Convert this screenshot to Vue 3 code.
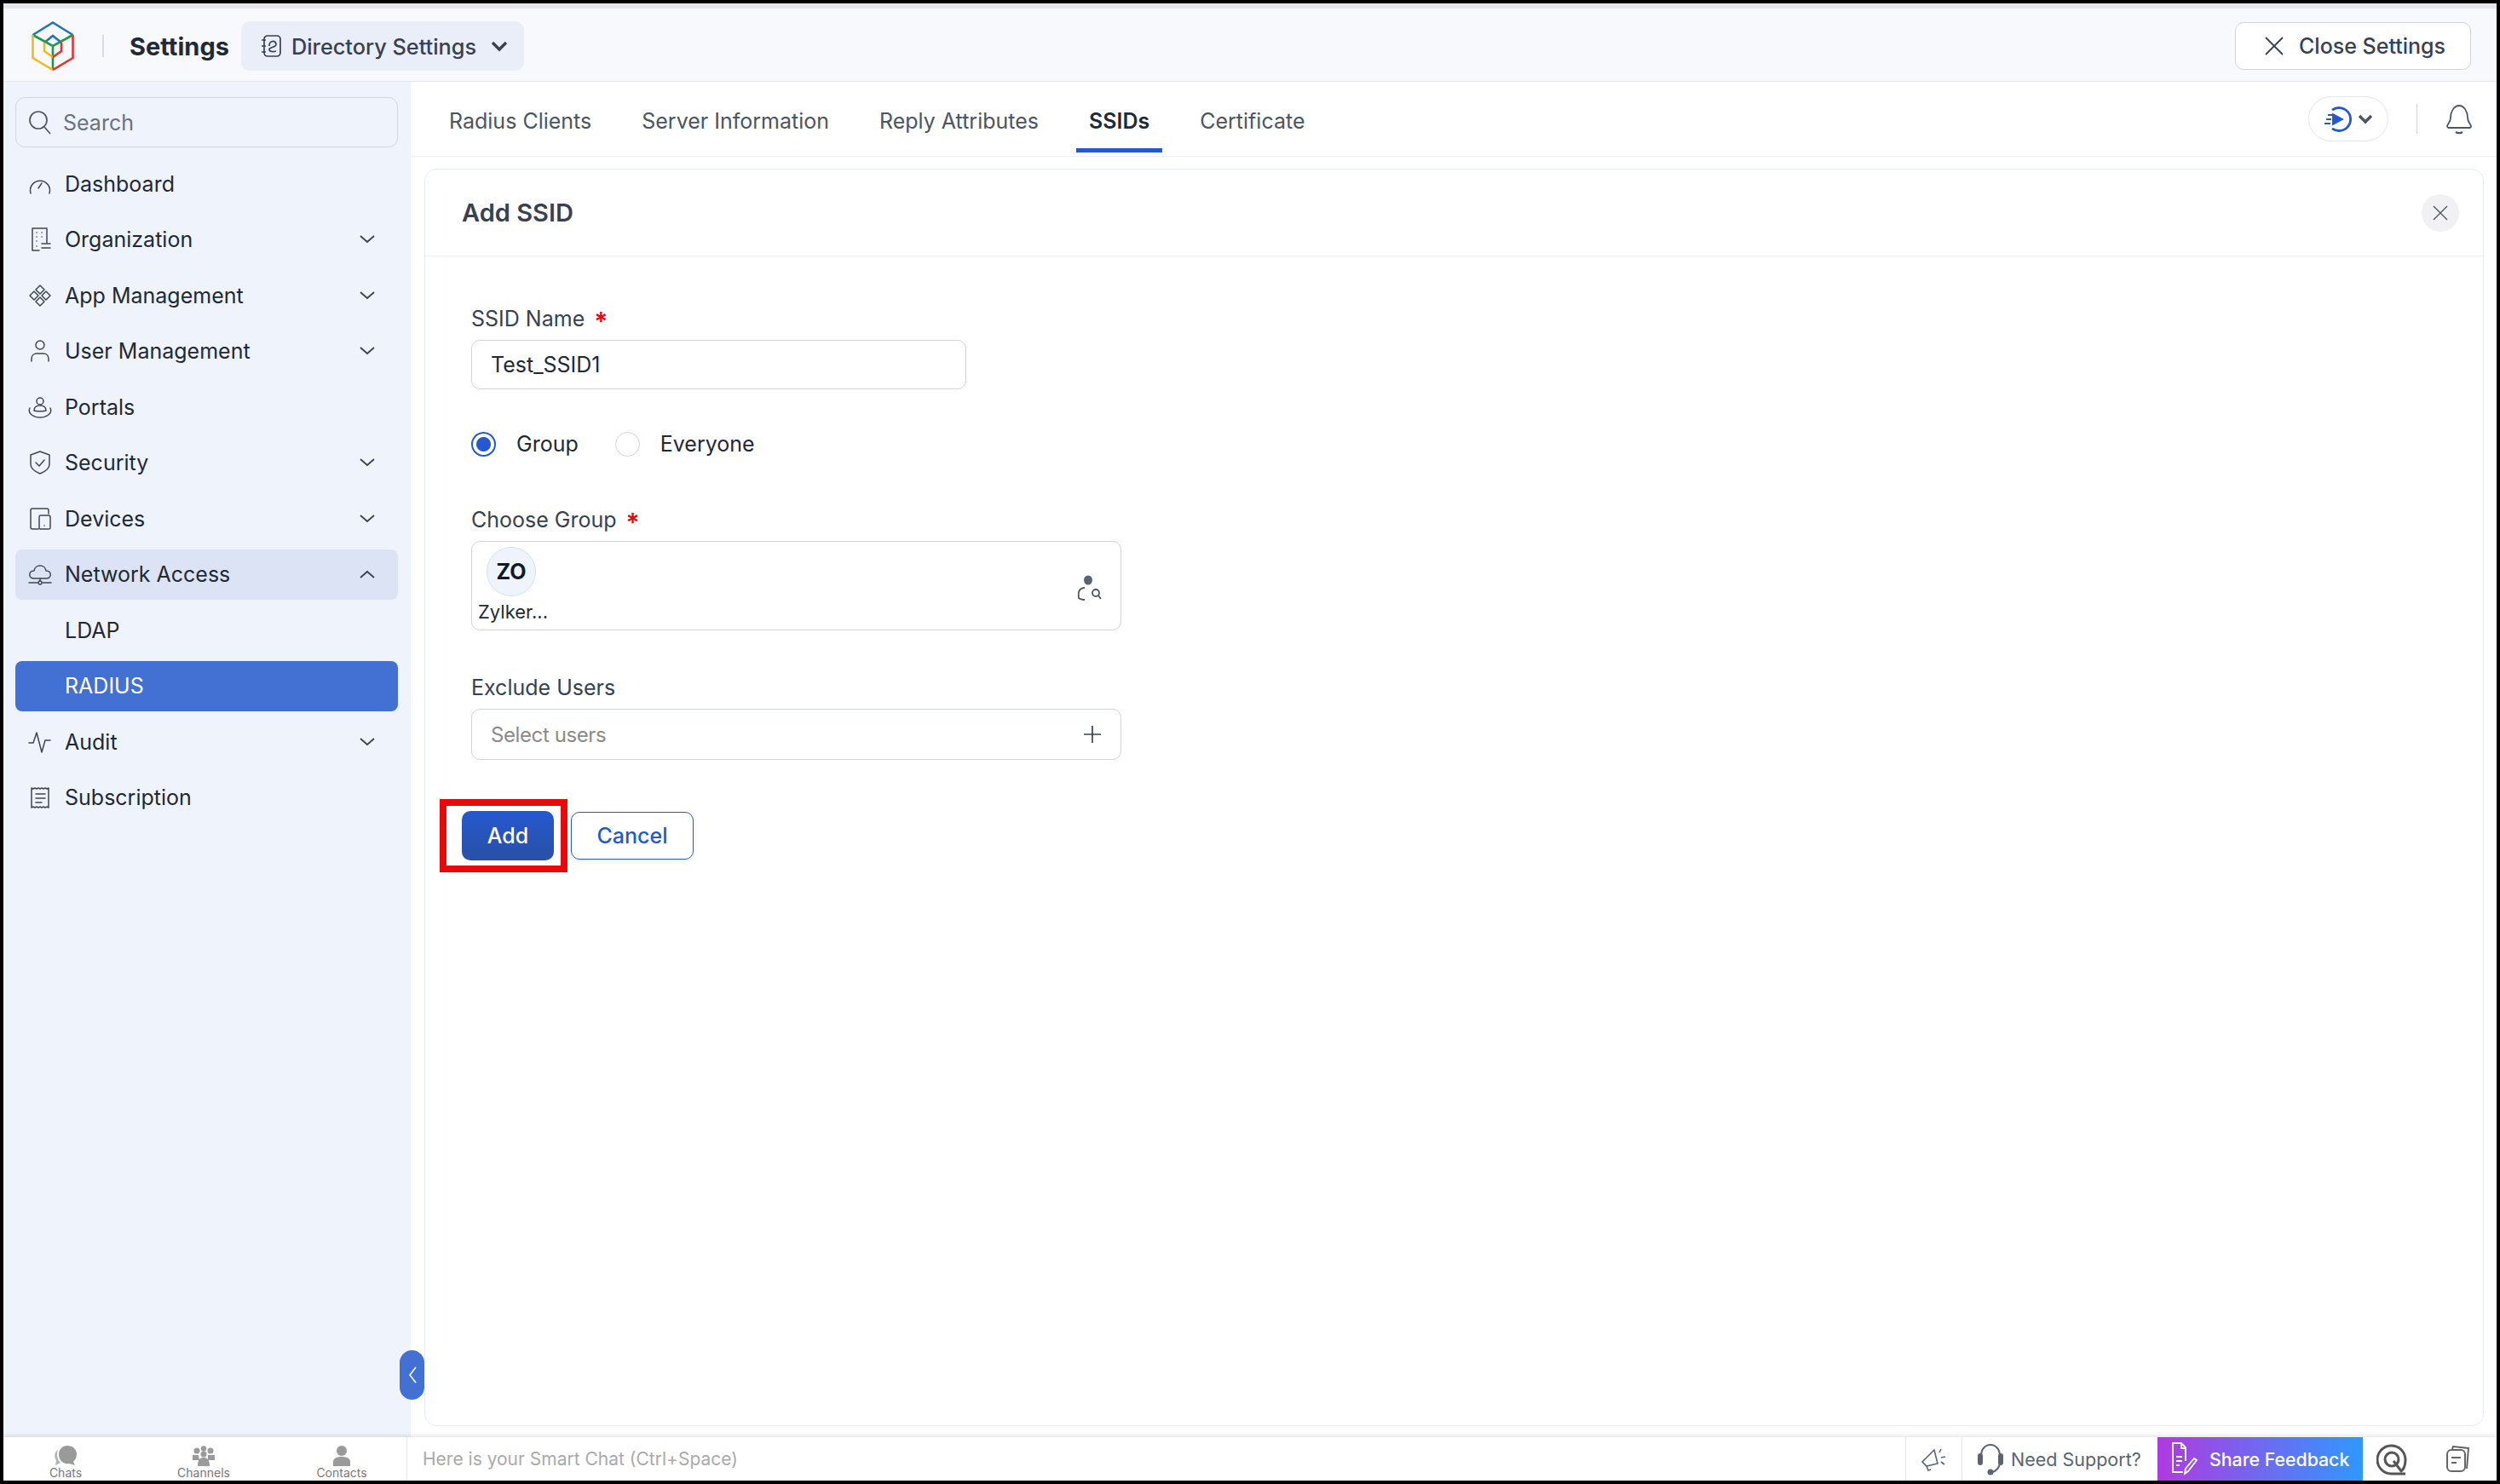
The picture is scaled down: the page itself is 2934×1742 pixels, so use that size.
<template>
  <div class="app">
    <header class="topbar">
      <svg class="logo" width="50" height="58" viewBox="0 0 50 58" fill="none" stroke-width="2.6">
        <path d="M1.500 16L25 1.500 48.500 16" stroke="#2272c3"></path>
        <path d="M15 25L25 17 35 25" stroke="#2272c3"></path>
        <path d="M1.500 16L25 29 48.500 16M25 29V57" stroke="#1f9b46"></path>
        <path d="M1.500 16V43L25 57" stroke="#f5b81f"></path>
        <path d="M15 25V35L25 42" stroke="#f5b81f"></path>
        <path d="M48.500 16V43L25 57" stroke="#e5322d"></path>
        <path d="M35 25V35L25 42" stroke="#e5322d"></path>
      </svg>
      <span class="logo-divider"></span>
      <span class="app-title">Settings</span>
      <div class="dir-pill">
        <svg width="24" height="26" viewBox="0 0 24 26" fill="none" stroke="#374151" stroke-width="1.700">
          <rect x="4" y="1" width="19" height="24" rx="4"></rect>
          <path d="M1 6h5M1 13h5M1 20h5M10 13c0-7 8-7 8-2 0 4-8 3-8 6 0 3 5 3 8 2"></path>
        </svg>
        <span>Directory Settings</span>
        <svg width="20" height="13" viewBox="0 0 20 13" fill="none" stroke="#374151" stroke-width="3.400">
          <path d="M2 2l8 8 8-8"></path>
        </svg>
      </div>
      <div class="close-settings">
        <svg width="22" height="22" viewBox="0 0 22 22" fill="none" stroke="#374151" stroke-width="1.800">
          <path d="M1 1l20 20M21 1L1 21"></path>
        </svg>
        <span>Close Settings</span>
      </div>
    </header>

    <div class="main">
      <aside class="sidebar">
        <div class="search">
          <svg width="26" height="28" viewBox="0 0 26 28" fill="none" stroke="#4b5563" stroke-width="1.700">
            <circle cx="11" cy="11" r="10"></circle>
            <path d="M18 19l7 8"></path>
          </svg>
          <span>Search</span>
        </div>
        <nav class="menu">
          <div
            v-for="item in menu"
            :key="item.label"
            class="menu-row"
            :class="{ open: item.open, active: item.active }"
          >
            <svg class="menu-icon" width="28" height="28" viewBox="0 0 28 28" fill="none" stroke="#3f4754" stroke-width="1.500" stroke-linecap="round" stroke-linejoin="round">
              <path v-for="d in item.icon" :key="d" :d="d"></path>
            </svg>
            <span class="menu-label">{{ item.label }}</span>
            <svg v-if="item.chevron" class="chev" width="18" height="10" viewBox="0 0 18 10" fill="none" stroke="#374151" stroke-width="1.800">
              <path :d="item.open ? 'M1 9l8-7 8 7' : 'M1 1l8 7 8-7'"></path>
            </svg>
          </div>
        </nav>
      </aside>

      <section class="content">
        <div class="tabs">
          <div v-for="tab in tabs" :key="tab" class="tab" :class="{ selected: tab === 'SSIDs' }">{{ tab }}</div>
          <div class="tab-tools">
            <div class="play-pill">
              <svg width="32" height="30" viewBox="0 0 32 30" fill="none" stroke="#2459cf" stroke-width="2.800">
                <path d="M9 4.200A13.500 13.500 0 1 1 9 25.800"></path>
                <path d="M9 7.500l14 7.500-14 7.500z" fill="#2459cf" stroke="none"></path>
                <path d="M4 10h5M2 15h6M0 20h7" stroke-width="1.800"></path>
              </svg>
              <svg width="18" height="12" viewBox="0 0 18 12" fill="none" stroke="#4b5563" stroke-width="3.400">
                <path d="M2 2l7 7 7-7"></path>
              </svg>
            </div>
            <span class="tool-divider"></span>
            <svg width="32" height="36" viewBox="0 0 32 36" fill="none" stroke="#4b5563" stroke-width="1.800">
              <path d="M6 16c0-7 4-14 10-14s10 7 10 14c0 5 3 7 4 10 0 1-1 2-2 2H4c-1 0-2-1-2-2 1-3 4-5 4-10z"></path>
              <path d="M12 33c2 1.500 6 1.500 8 0" stroke-width="2.200"></path>
            </svg>
          </div>
        </div>

        <div class="card">
          <div class="card-head">
            <h2>Add SSID</h2>
            <div class="round-close">
              <svg width="18" height="18" viewBox="0 0 18 18" fill="none" stroke="#4b5563" stroke-width="1.400">
                <path d="M1 1l16 16M17 1L1 17"></path>
              </svg>
            </div>
          </div>

          <div class="card-body">
            <div class="form">
              <label class="field-label">SSID Name <em>*</em></label>
              <div class="input short">Test_SSID1</div>

              <div class="radios">
                <span class="radio on"></span>
                <span class="radio-text">Group</span>
                <span class="radio"></span>
                <span class="radio-text">Everyone</span>
              </div>

              <label class="field-label group-label">Choose Group <em>*</em></label>
              <div class="group-box">
                <div class="chip">
                  <span class="avatar">ZO</span>
                  <span class="chip-name">Zylker...</span>
                </div>
                <svg class="user-search" width="30" height="30" viewBox="0 0 30 30" fill="none" stroke="#4b5563" stroke-width="1.800">
                  <ellipse cx="13" cy="6" rx="5" ry="5.500" fill="#5b6472" stroke="none"></ellipse>
                  <path d="M9 15c-6 0-8 4-7 12 1 1 4 2 7 2"></path>
                  <circle cx="22" cy="21" r="4"></circle>
                  <path d="M25 24l3 4"></path>
                </svg>
              </div>

              <label class="field-label exclude-label">Exclude Users</label>
              <div class="input wide placeholder">
                <span>Select users</span>
                <svg width="22" height="22" viewBox="0 0 22 22" fill="none" stroke="#374151" stroke-width="1.700">
                  <path d="M11 1v20M1 11h20"></path>
                </svg>
              </div>
            </div>

            <div class="actions">
              <button class="btn-add">
                Add
                <span class="highlight"></span>
              </button>
              <button class="btn-cancel">Cancel</button>
            </div>
          </div>
        </div>
      </section>

      <div class="collapse-tab">
        <svg width="10" height="20" viewBox="0 0 10 20" fill="none" stroke="#fff" stroke-width="1.600">
          <path d="M9 1L2 10l7 9"></path>
        </svg>
      </div>
    </div>

    <footer class="bottombar">
      <div class="chat-tabs">
        <div class="chat-tab">
          <svg width="28" height="24" viewBox="0 0 28 24" fill="#9a9a9a">
            <path d="M5 4C1 8 0 13 3 17l-1 6 6-3c-4-4-5-10-3-16z" opacity=".75"></path>
            <path d="M16 0c6 0 11 4 11 10 0 4-2 7-4 9l2 4-7-2C11 22 6 17 6 10 6 4 11 0 16 0z"></path>
          </svg>
          <span>Chats</span>
        </div>
        <div class="chat-tab">
          <svg width="28" height="24" viewBox="0 0 28 24" fill="#9a9a9a">
            <circle cx="6" cy="6" r="3.500"></circle>
            <circle cx="14" cy="3.500" r="3.200"></circle>
            <circle cx="22" cy="6" r="3.500"></circle>
            <circle cx="14" cy="10" r="3.500"></circle>
            <path d="M1 11h7l1 6H1zM19 11h8v6h-8zM7 24c0-8 3-10 7-10s7 2 7 10z"></path>
          </svg>
          <span>Channels</span>
        </div>
        <div class="chat-tab">
          <svg width="24" height="24" viewBox="0 0 24 24" fill="#9a9a9a">
            <ellipse cx="12" cy="6" rx="6" ry="6"></ellipse>
            <path d="M2 24v-5c0-4 4-6 10-6s10 2 10 6v5z"></path>
          </svg>
          <span>Contacts</span>
        </div>
      </div>
      <div class="smart-chat">Here is your Smart Chat (Ctrl+Space)</div>
      <div class="bar-cell megaphone">
        <svg width="30" height="28" viewBox="0 0 30 28" fill="none" stroke="#5b6472" stroke-width="1.600">
          <path d="M1 17L15 3l4 16-13 3zM6 22l2 5 3-1M23 2l-2 4M28 11l-5 1M27 20l-4-3"></path>
        </svg>
      </div>
      <div class="bar-cell support">
        <svg width="30" height="40" viewBox="0 0 30 40" fill="none" stroke="#5b6472" stroke-width="2">
          <path d="M4 16C4 8 9 3 15 3s11 5 11 13v8c0 5-4 10-9 11"></path>
          <rect x="1" y="14" width="4" height="12" rx="2" fill="#5b6472"></rect>
          <rect x="25" y="14" width="4" height="12" rx="2" fill="#5b6472"></rect>
          <circle cx="15" cy="35" r="2.500" fill="#5b6472"></circle>
        </svg>
        <span>Need Support?</span>
      </div>
      <div class="feedback">
        <svg width="30" height="40" viewBox="0 0 30 40" fill="none" stroke="#fff" stroke-width="1.800">
          <path d="M16 22V6L11 1H1v34h12M11 1v6h5M5 17h7M5 22h7M5 27h4"></path>
          <path d="M15 37l1-6 10-12 3 2-10 13z"></path>
        </svg>
        <span>Share Feedback</span>
      </div>
      <div class="bar-icon">
        <svg width="36" height="38" viewBox="0 0 36 38" fill="none" stroke="#555" stroke-width="3">
          <path d="M34 36H18A16.500 16.500 0 1 1 34 19c0 6-1 10-4 13"></path>
          <circle cx="18" cy="19" r="8"></circle>
          <path d="M20 21l10 13"></path>
        </svg>
      </div>
      <div class="bar-icon stack">
        <svg width="28" height="32" viewBox="0 0 28 32" fill="none" stroke="#666" stroke-width="2">
          <path d="M8 4l1-3 18 2-2 24"></path>
          <rect x="2" y="5" width="21" height="25" rx="5"></rect>
          <path d="M7 14h11M7 20h6"></path>
        </svg>
      </div>
    </footer>
  </div>
</template>

<script setup>
const tabs = ['Radius Clients', 'Server Information', 'Reply Attributes', 'SSIDs', 'Certificate']

const menu = [
  { label: 'Dashboard', icon: ['M3 25A11.500 11.500 0 1 1 25 25', 'M12 19l4-6'] },
  {
    label: 'Organization',
    chevron: true,
    icon: ['M13 27H5V1h17v17', 'M10 6h.1M16 6h.1M10 11h.1M16 11h.1M10 16h.1M10 22h.1', 'M16 19h10M16 24h10']
  },
  {
    label: 'App Management',
    chevron: true,
    icon: ['M14 2l5 5-5 5-5-5z', 'M14 16l5 5-5 5-5-5z', 'M7 9l5 5-5 5-5-5z', 'M21 9l5 5-5 5-5-5z']
  },
  {
    label: 'User Management',
    chevron: true,
    icon: ['M19 7a5 5 0 1 1-10 0 5 5 0 0 1 10 0z', 'M4 26v-3c0-4 3-6 6-6h8c3 0 6 2 6 6v3']
  },
  {
    label: 'Portals',
    icon: ['M18 7a4 4 0 1 1-8 0 4 4 0 0 1 8 0z', 'M7 18c0-4 3-6 7-6s7 2 7 6c-2 1-12 1-14 0z', 'M2 15c-3 6 4 11 12 11s15-5 12-11']
  },
  {
    label: 'Security',
    chevron: true,
    icon: ['M14 1l11 4v11c0 6-6 9-11 11C9 25 3 22 3 16V5z', 'M9 14l4 4 6-7']
  },
  {
    label: 'Devices',
    chevron: true,
    icon: ['M12 26H5c-1 0-2-1-2-2V4c0-1 1-2 2-2h17c1 0 2 1 2 2v4', 'M14 10h10c1 0 2 1 2 2v13c0 1-1 1-2 1H14c-1 0-1 0-1-1V12c0-1 0-2 1-2z', 'M19 22h.1']
  },
  {
    label: 'Network Access',
    chevron: true,
    open: true,
    icon: ['M7 19c-7 0-7-9 0-9 1-8 13-8 14 0 7 0 7 9 0 9z', 'M1 24h10M17 24h10M14 19v3', 'M16 24a2 2 0 1 1-4 0 2 2 0 0 1 4 0z']
  },
  { label: 'LDAP', icon: [] },
  { label: 'RADIUS', active: true, icon: [] },
  {
    label: 'Audit',
    chevron: true,
    icon: ['M1 15h5l4-12 6 23 4-14h6']
  },
  {
    label: 'Subscription',
    icon: ['M4 3l2 1 2-1 2 1 2-1 2 1 2-1 2 1 2-1 2 1 2-1v23l-2-1-2 1-2-1-2 1-2-1-2 1-2-1-2 1-2-1-2 1z', 'M9 10h11M9 15h11M9 20h7']
  }
]
</script>

<style>
html,
body {
  margin: 0;
  background: #000;
}
</style>

<style scoped>
.app {
  margin: 4px;
  height: 1734px;
  width: 2926px;
  display: flex;
  flex-direction: column;
  background: #fff;
  font-family: Inter, "Liberation Sans", sans-serif;
  font-size: 25px;
  color: #374151;
  overflow: hidden;
}

.topbar {
  box-sizing: border-box;
  height: 92px;
  flex: none;
  display: flex;
  align-items: center;
  padding: 3px 30px 0 33px;
  background: #f7f9fc;
  border-top: 6px solid #e5e7eb;
  border-bottom: 1px solid #e3e6ec;
}

.logo-divider {
  width: 2px;
  height: 26px;
  background: #d9dce2;
  margin: 0 30px 0 33px;
}

.app-title {
  font-size: 29px;
  font-weight: 700;
  color: #1f2937;
  margin-right: 14px;
}

.dir-pill {
  display: flex;
  align-items: center;
  height: 58px;
  width: 332px;
  box-sizing: border-box;
  padding-left: 23px;
  background: #e9eef9;
  border-radius: 10px;
  font-size: 25.300px;
  font-weight: 500;
}

.dir-pill span {
  margin: 0 17px 0 12px;
}

.close-settings {
  margin-left: auto;
  box-sizing: border-box;
  width: 277px;
  height: 56px;
  display: flex;
  align-items: center;
  gap: 18px;
  padding-left: 34px;
  background: #fff;
  border: 1px solid #cfd3da;
  border-radius: 10px;
  font-weight: 500;
}

.main {
  flex: 1;
  min-height: 0;
  display: flex;
  position: relative;
}

.sidebar {
  box-sizing: border-box;
  width: 478px;
  flex: none;
  padding: 18px 15px 0 14px;
  background: #eff3fb;
}

.search {
  box-sizing: border-box;
  height: 59px;
  display: flex;
  align-items: center;
  gap: 14px;
  padding-left: 15px;
  border: 1px solid #d3d7de;
  border-radius: 11px;
  color: #6b7280;
}

.menu {
  margin-top: 13.400px;
  display: flex;
  flex-direction: column;
  gap: 6.500px;
}

.menu-row {
  height: 59px;
  display: flex;
  align-items: center;
  padding: 0 27px 0 15px;
  border-radius: 8px;
  color: #1f2937;
}

.menu-row.open {
  background: #dce3f4;
}

.menu-row.active {
  background: #4270d3;
  color: #fff;
}

.menu-icon {
  flex: none;
}

.menu-label {
  margin-left: 15px;
}

.chev {
  margin-left: auto;
}

.content {
  flex: 1;
  min-width: 0;
  display: flex;
  flex-direction: column;
}

.tabs {
  box-sizing: border-box;
  height: 88px;
  flex: none;
  display: flex;
  gap: 29px;
  padding: 0 28px 4px 30px;
  border-bottom: 1px solid #eceef2;
}

.tab {
  padding: 9px 15px 0;
  display: flex;
  align-items: center;
  color: #4b5563;
}

.tab.selected {
  font-weight: 600;
  color: #1f2937;
  border-bottom: 5px solid #2459cf;
  padding-top: 14px;
}

.tab-tools {
  margin-left: auto;
  display: flex;
  align-items: center;
  padding-top: 4px;
}

.play-pill {
  box-sizing: border-box;
  width: 94px;
  height: 53px;
  display: flex;
  align-items: center;
  gap: 7px;
  padding-left: 18px;
  border: 1px solid #e3e5ea;
  border-radius: 27px;
}

.tool-divider {
  width: 1px;
  height: 35px;
  background: #d0d3d9;
  margin: 0 33px;
}

.card {
  flex: 1;
  min-height: 0;
  margin: 14px 15px 13px 16px;
  background: #fff;
  border: 1px solid #e6ecf7;
  border-radius: 14px;
  display: flex;
  flex-direction: column;
}

.card-head {
  box-sizing: border-box;
  height: 102px;
  flex: none;
  display: flex;
  align-items: center;
  justify-content: space-between;
  padding: 0 28px 0 43px;
  border-bottom: 1px solid #eff1f5;
}

.card-head h2 {
  margin: 0;
  font-size: 29px;
  font-weight: 600;
  color: #374151;
}

.round-close {
  width: 44px;
  height: 44px;
  display: flex;
  align-items: center;
  justify-content: center;
  border-radius: 50%;
  background: #f1f1f3;
}

.card-body {
  padding: 57px 0 0 43px;
}

.form {
  padding-left: 11px;
}

.field-label {
  display: block;
  line-height: 32px;
  color: #374151;
}

.field-label em {
  font-style: normal;
  font-size: 30px;
  font-weight: 600;
  line-height: 0;
  vertical-align: -5px;
  color: #e60a0a;
  margin-left: 4px;
}

.input {
  box-sizing: border-box;
  display: flex;
  align-items: center;
  margin-top: 9px;
  padding: 0 22px;
  background: #fff;
  border: 1px solid #d0d3d9;
  border-radius: 10px;
  color: #1f2937;
}

.input.short {
  width: 581px;
  height: 58px;
}

.input.wide {
  width: 763px;
  height: 60px;
  justify-content: space-between;
}

.placeholder span {
  font-size: 24px;
  letter-spacing: -0.400px;
  color: #8a8a8a;
}

.radios {
  margin-top: 49px;
  height: 30px;
  display: flex;
  align-items: center;
}

.radio {
  box-sizing: border-box;
  width: 29px;
  height: 29px;
  border: 1px solid #d0d3d9;
  border-radius: 50%;
}

.radio.on {
  border: 2px solid #2459cf;
  background: radial-gradient(circle, #2459cf 0 8px, #fff 9px);
}

.radio-text {
  margin: 0 43px 0 24px;
  color: #1f2937;
}

.group-label {
  margin-top: 58px;
}

.group-box {
  box-sizing: border-box;
  width: 763px;
  height: 105px;
  margin-top: 9px;
  display: flex;
  justify-content: space-between;
  padding: 6px 21px 0 7px;
  border: 1px solid #d0d3d9;
  border-radius: 10px;
}

.chip {
  width: 80px;
  display: flex;
  flex-direction: column;
  align-items: center;
}

.avatar {
  box-sizing: border-box;
  width: 58px;
  height: 58px;
  margin-right: 2px;
  display: flex;
  align-items: center;
  justify-content: center;
  border: 1px solid #d5e0f5;
  border-radius: 50%;
  background: #eff3fb;
  font-weight: 700;
  color: #111827;
}

.chip-name {
  margin-top: 3px;
  margin-left: 2px;
  font-size: 22px;
  line-height: 30px;
  color: #1f2937;
}

.user-search {
  margin-top: 33px;
}

.exclude-label {
  margin-top: 51px;
}

.actions {
  margin-top: 60px;
  display: flex;
  align-items: center;
  gap: 20px;
}

.btn-add,
.btn-cancel {
  box-sizing: border-box;
  font: inherit;
  font-weight: 500;
  border-radius: 10px;
}

.btn-add {
  position: relative;
  width: 108px;
  height: 58px;
  border: none;
  color: #fff;
  background: linear-gradient(#2459cf, #2a50a5);
}

.highlight {
  position: absolute;
  top: -14px;
  bottom: -14px;
  left: -26px;
  right: -16px;
  border: 8px solid #e60a0a;
}

.btn-cancel {
  width: 144px;
  height: 56px;
  color: #2459cf;
  background: #fff;
  border: 1px solid #2459cf;
  box-shadow: 0 2px 6px rgba(36, 89, 207, 0.12);
}

.collapse-tab {
  position: absolute;
  left: 465px;
  bottom: 44px;
  width: 29px;
  height: 58px;
  display: flex;
  align-items: center;
  justify-content: center;
  border-radius: 15px;
  background: #4270d3;
}

.bottombar {
  height: 51px;
  flex: none;
  display: flex;
  align-items: stretch;
  background: #fff;
  box-shadow: 0 -2px 5px rgba(0, 0, 0, 0.1);
  position: relative;
}

.chat-tabs {
  box-sizing: border-box;
  width: 474px;
  flex: none;
  display: flex;
  border-right: 1px solid #e2e4e8;
}

.chat-tab {
  width: 162px;
  flex: none;
  margin-left: -8px;
  margin-right: 8px;
  display: flex;
  flex-direction: column;
  align-items: center;
  padding-top: 10px;
  box-sizing: border-box;
  font-size: 14px;
  line-height: 16px;
  color: #777;
}

.chat-tab svg {
  flex: none;
}

.smart-chat {
  flex: 1;
  display: flex;
  align-items: center;
  padding-left: 18px;
  font-size: 21px;
  color: #aaa;
}

.bar-cell {
  display: flex;
  align-items: center;
  border-left: 1px solid #e2e4e8;
}

.megaphone {
  width: 66px;
  box-sizing: border-box;
  justify-content: center;
}

.support {
  width: 230px;
  box-sizing: border-box;
  padding-left: 18px;
  gap: 9px;
  font-size: 21.500px;
  color: #5b6472;
}

.feedback {
  width: 241px;
  flex: none;
  box-sizing: border-box;
  display: flex;
  align-items: center;
  gap: 14px;
  padding-left: 17px;
  font-size: 21.300px;
  font-weight: 500;
  color: #fff;
  background: linear-gradient(90deg, #b03adf, #2f98ff);
}

.bar-icon {
  display: flex;
  align-items: center;
  padding-left: 16px;
}

.bar-icon.stack {
  padding: 0 32px 0 45px;
}
</style>
